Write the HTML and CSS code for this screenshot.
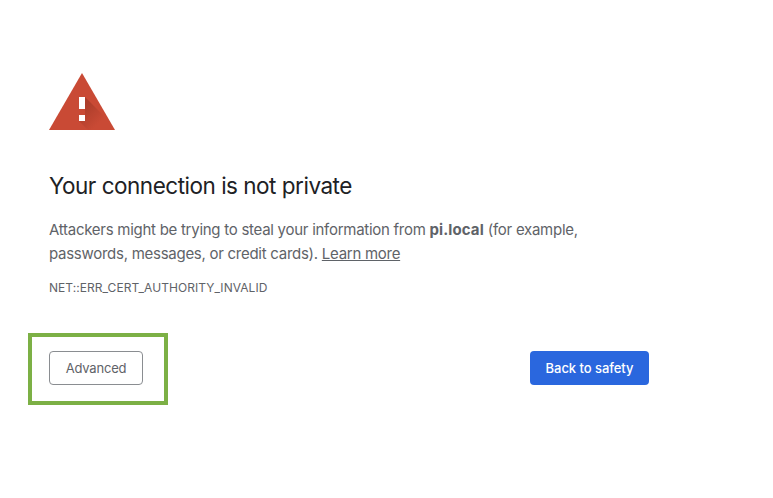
FILE: index.html
```html
<!DOCTYPE html>
<html lang="en">
<head>
    <meta charset="UTF-8">
    <title>Privacy error</title>
    <link rel="stylesheet" href="styles.css">
</head>
<body>
    <div class="wrap">
        <svg class="icon" width="66" height="58" viewBox="0 0 66 58">
            <defs>
                <linearGradient id="shade" gradientUnits="userSpaceOnUse" x1="34" y1="34" x2="50" y2="50">
                    <stop offset="0" stop-color="#8f3020" stop-opacity="0.5"/>
                    <stop offset="1" stop-color="#8f3020" stop-opacity="0"/>
                </linearGradient>
            </defs>
            <polygon points="33,0 66,57 0,57" fill="#c94a35"/>
            <polygon points="36,24 61.9,49.9 66,57 39,57 30,48 36,48" fill="url(#shade)"/>
            <rect x="30" y="24" width="6" height="12" fill="#fff"/>
            <rect x="30" y="42" width="6" height="6" fill="#fff"/>
        </svg>
        <h1 class="title">Your connection is not private</h1>
        <p class="message">Attackers might be trying to steal your information from <b>pi.local</b> (for example, passwords, messages, or credit cards). <a href="#">Learn more</a></p>
        <div class="code">NET::ERR_CERT_AUTHORITY_INVALID</div>
        <div class="buttons">
            <button class="advanced">Advanced</button>
            <button class="back">Back to safety</button>
            <div class="highlight"></div>
        </div>
    </div>
</body>
</html>
```

FILE: styles.css
```css
html, body {
    margin: 0;
    height: 100%;
    background-color: #fff;
}

body {
    font-family: Inter, "Liberation Sans", sans-serif;
    overflow: hidden;
}

.wrap {
    width: 600px;
    padding: 73px 0 0 49px;
}

.icon {
    display: block;
}

.title {
    margin: 41px 0 0 0;
    font-size: 22.5px;
    line-height: 28px;
    font-weight: 400;
    letter-spacing: -0.49px;
    color: #202124;
}

.message {
    width: 540px;
    margin: 18px 0 0 0;
    font-size: 15px;
    line-height: 24px;
    letter-spacing: -0.27px;
    color: #5f6368;
}

.message b {
    font-weight: 700;
    letter-spacing: 0.1px;
}

.message a {
    color: #5f6368;
}

.code {
    margin-top: 14px;
    font-size: 12px;
    line-height: 16px;
    letter-spacing: 0.05px;
    color: #5f6368;
}

.buttons {
    position: relative;
    display: flex;
    justify-content: space-between;
    margin-top: 55px;
}

button {
    height: 34px;
    font-family: inherit;
    font-size: 13px;
    border-radius: 4px;
}

.advanced {
    width: 94px;
    background-color: #fff;
    border: 1px solid #8a8d91;
    color: #5f6368;
    letter-spacing: -0.2px;
}

.back {
    width: 119px;
    background-color: #2a67de;
    border: none;
    color: #fff;
    font-weight: 500;
    letter-spacing: -0.05px;
}

.highlight {
    position: absolute;
    left: -21px;
    top: -18px;
    width: 132px;
    height: 64px;
    border: 4px solid #7cb045;
}
```
